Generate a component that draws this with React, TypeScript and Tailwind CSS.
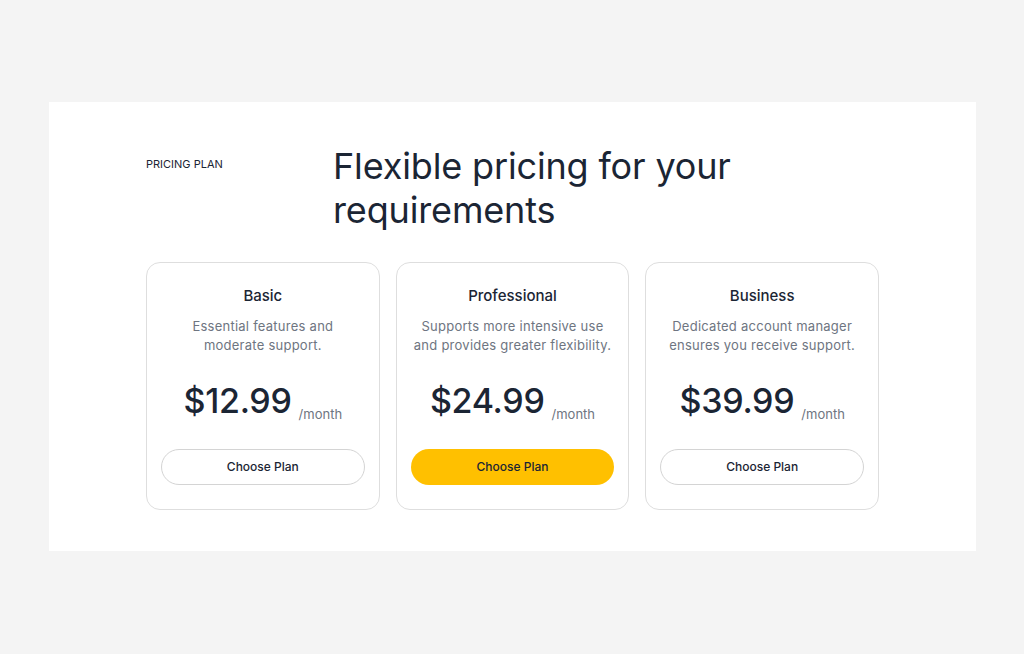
import React from "react";

const plans = [
  { name: "Basic", desc: ["Essential features and", "moderate support."], price: "$12.99", highlight: false },
  { name: "Professional", desc: ["Supports more intensive use", "and provides greater flexibility."], price: "$24.99", highlight: true },
  { name: "Business", desc: ["Dedicated account manager", "ensures you receive support."], price: "$39.99", highlight: false },
];

export default function App() {
  return (
    <div
      className="min-h-screen w-full bg-[#f4f4f4] pt-[102px] pb-[103px]"
      style={{ fontFamily: 'Inter, "Open Sans", sans-serif' }}
    >
      <div className="ml-[49px] w-[927px] bg-white px-[97px] pt-[42px] pb-[41px] text-[#1b2534]">
        <div className="flex">
          <div className="w-[187px] shrink-0 pt-[12px] text-[11px] leading-[16px] text-[#1b2534]">PRICING PLAN</div>
          <h1 className="text-[36px] leading-[44px] font-normal tracking-[-0.15px]">
            Flexible pricing for your
            <br />
            requirements
          </h1>
        </div>
        <div className="mt-[30px] grid grid-cols-3 gap-[16px]">
          {plans.map((p) => (
            <div
              key={p.name}
              className="flex flex-col items-center rounded-[14px] border border-[#dedede] px-[14px] pt-[22px] pb-[24px]"
            >
              <div className="text-[15px] leading-[22px] font-medium">{p.name}</div>
              <div className="mt-[10px] text-center text-[13px] leading-[19px] tracking-[0.25px] text-[#6e7581]">
                {p.desc[0]}
                <br />
                {p.desc[1]}
              </div>
              <div className="mt-[24px] flex items-end gap-[7px]">
                <span className="text-[34px] leading-[44px] font-medium tracking-[-0.3px]">{p.price}</span>
                <span className="text-[13px] leading-[18px] text-[#6e7581]">/month</span>
              </div>
              <button
                className={
                  p.highlight
                    ? "mt-[26px] h-[36px] w-full rounded-full bg-[#ffc000] text-[12px] font-medium text-[#1b2534]"
                    : "mt-[26px] h-[36px] w-full rounded-full border border-[#d4d4d4] bg-white text-[12px] font-medium text-[#1b2534]"
                }
              >
                Choose Plan
              </button>
            </div>
          ))}
        </div>
      </div>
    </div>
  );
}
